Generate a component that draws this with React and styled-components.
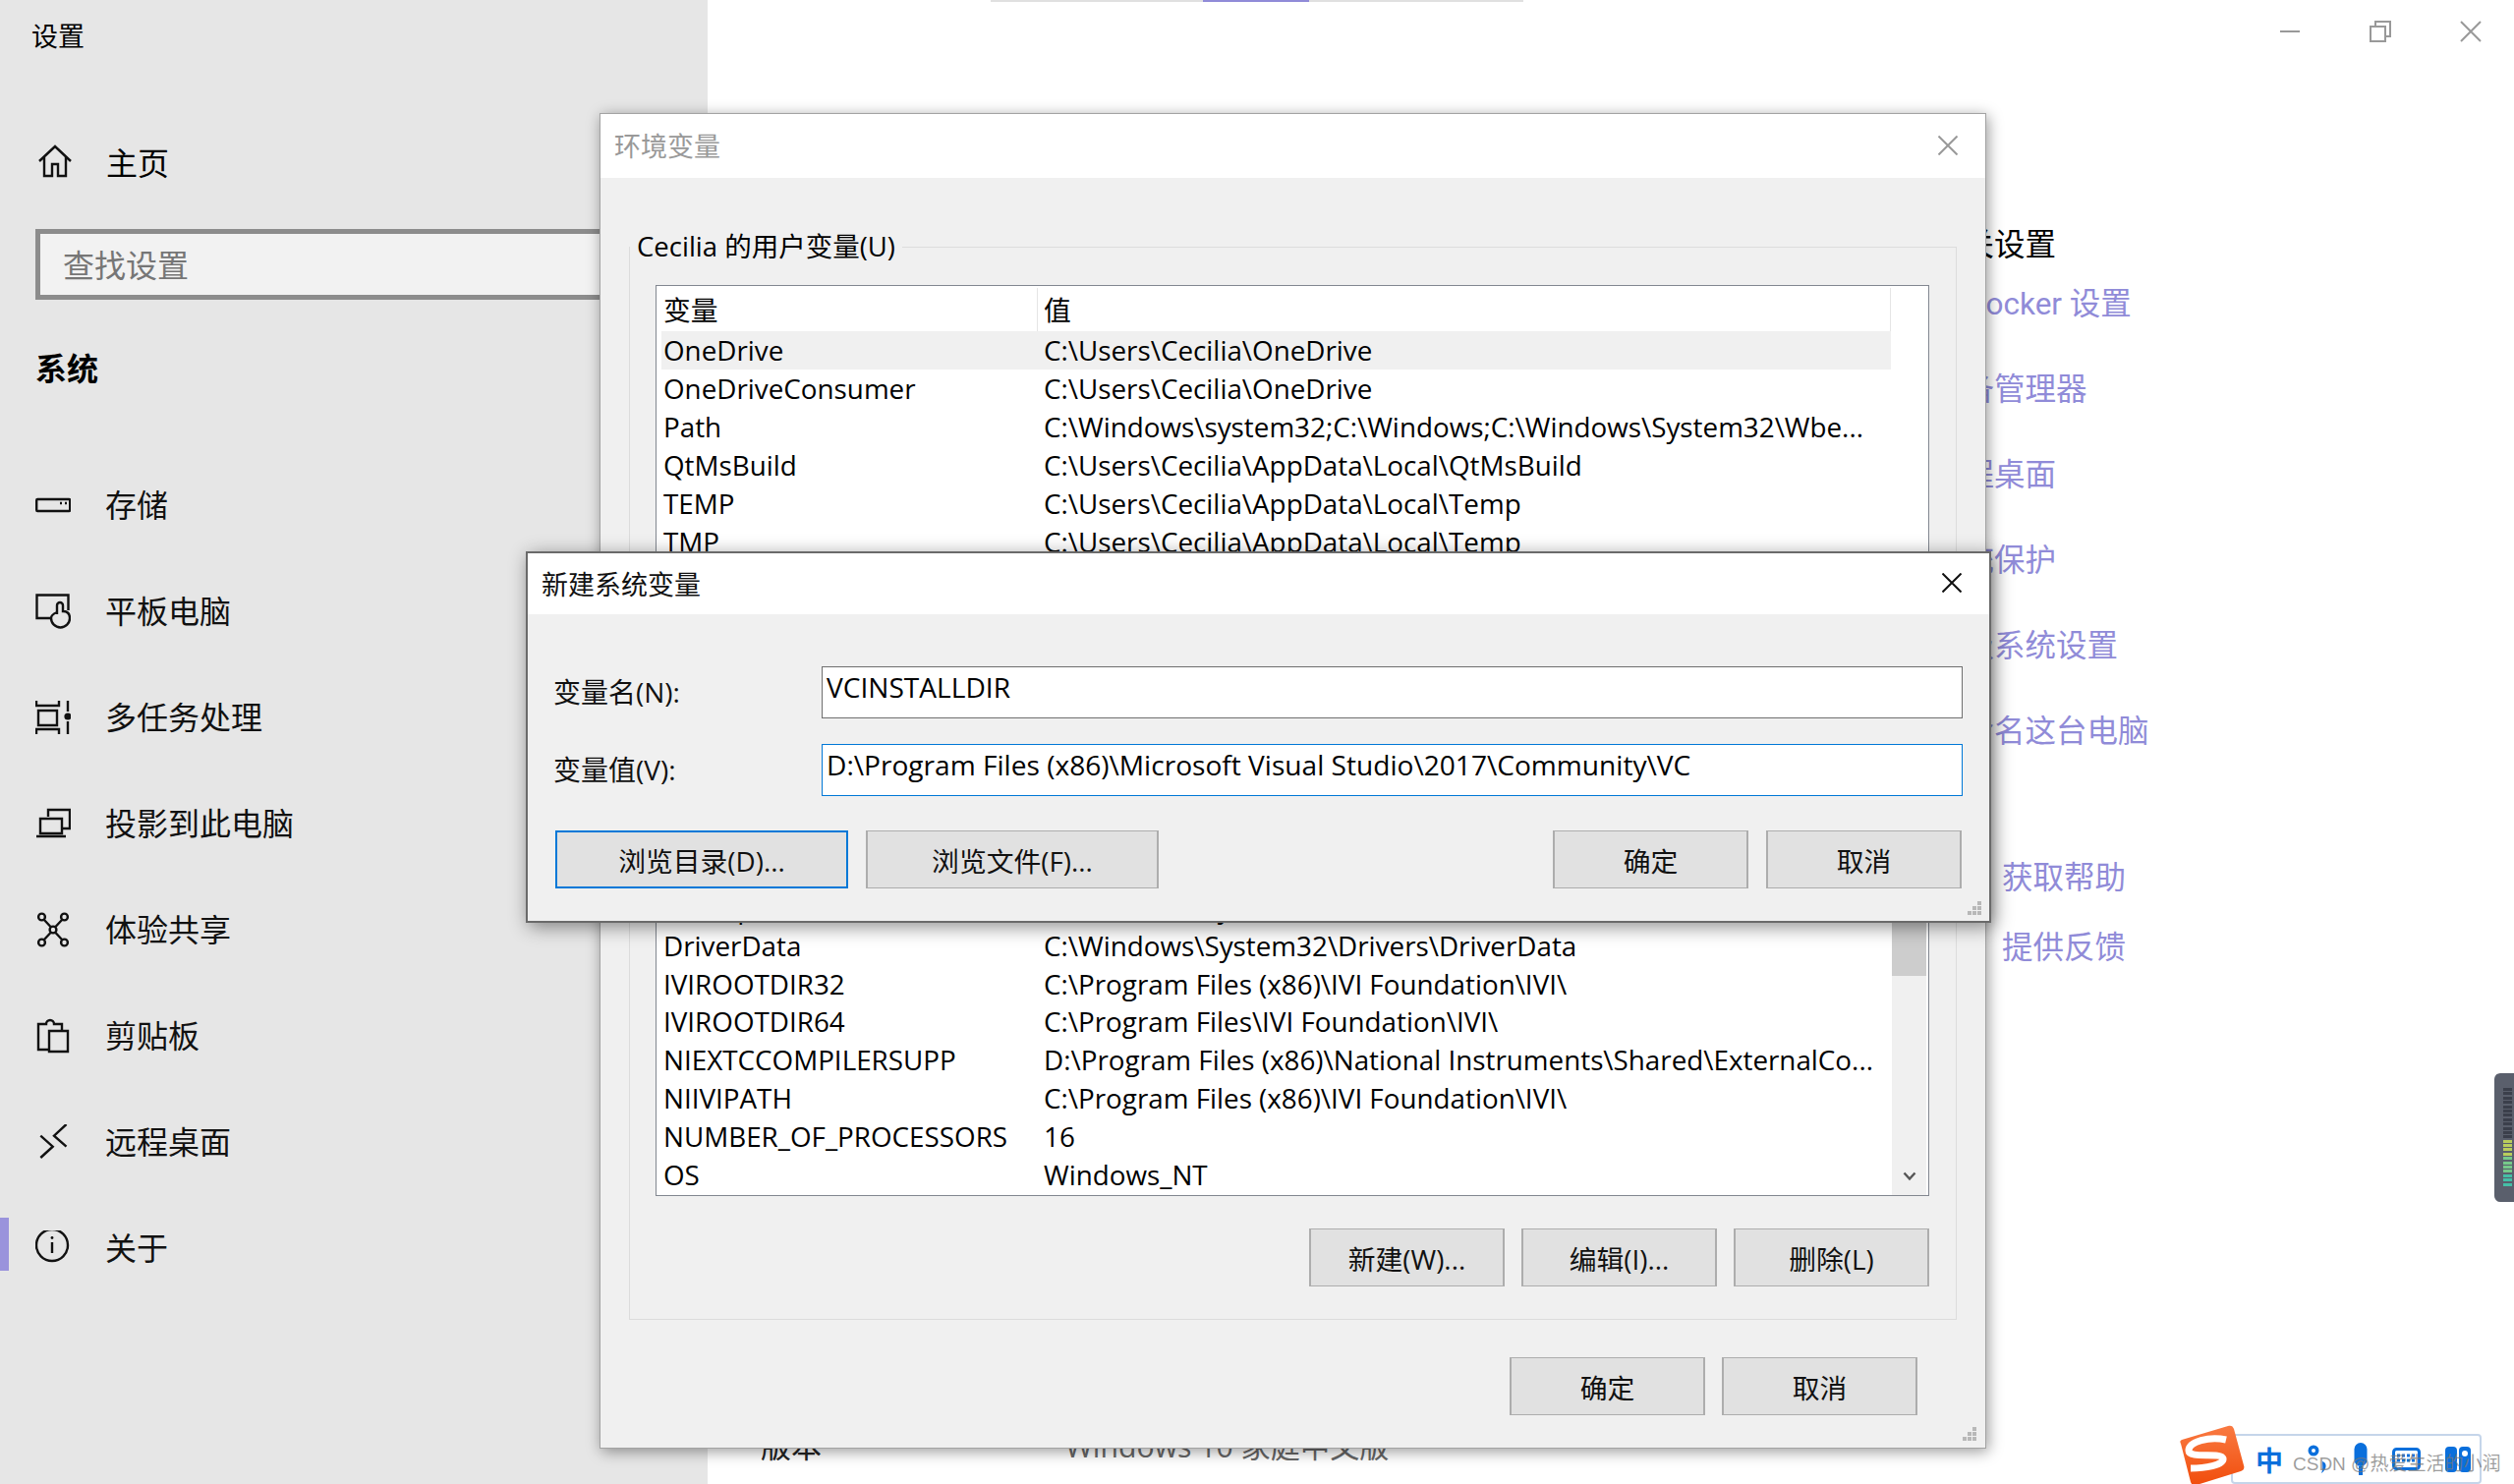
import React from "react";
import styled, { createGlobalStyle } from "styled-components";

const UI_FONT = `"Open Sans", "Noto Sans CJK SC", sans-serif`;
const CJK_FONT = `"Noto Sans CJK SC", "Noto Sans", sans-serif`;

const NAV_ITEMS = [
  { label: "存储", icon: "storage" },
  { label: "平板电脑", icon: "tablet" },
  { label: "多任务处理", icon: "multitask" },
  { label: "投影到此电脑", icon: "project" },
  { label: "体验共享", icon: "share" },
  { label: "剪贴板", icon: "clipboard" },
  { label: "远程桌面", icon: "remote" },
  { label: "关于", icon: "about", active: true },
];

const USER_VARS = [
  ["OneDrive", "C:\\Users\\Cecilia\\OneDrive"],
  ["OneDriveConsumer", "C:\\Users\\Cecilia\\OneDrive"],
  ["Path", "C:\\Windows\\system32;C:\\Windows;C:\\Windows\\System32\\Wbe..."],
  ["QtMsBuild", "C:\\Users\\Cecilia\\AppData\\Local\\QtMsBuild"],
  ["TEMP", "C:\\Users\\Cecilia\\AppData\\Local\\Temp"],
  ["TMP", "C:\\Users\\Cecilia\\AppData\\Local\\Temp"],
];

const SYSTEM_VARS = [
  ["ACSetupSvcPort", "23210"],
  ["ACSvcPort", "17532"],
  ["ALLUSERSPROFILE", "C:\\ProgramData"],
  ["ComSpec", "C:\\Windows\\system32\\cmd.exe"],
  ["DriverData", "C:\\Windows\\System32\\Drivers\\DriverData"],
  ["IVIROOTDIR32", "C:\\Program Files (x86)\\IVI Foundation\\IVI\\"],
  ["IVIROOTDIR64", "C:\\Program Files\\IVI Foundation\\IVI\\"],
  ["NIEXTCCOMPILERSUPP", "D:\\Program Files (x86)\\National Instruments\\Shared\\ExternalCo..."],
  ["NIIVIPATH", "C:\\Program Files (x86)\\IVI Foundation\\IVI\\"],
  ["NUMBER_OF_PROCESSORS", "16"],
  ["OS", "Windows_NT"],
];

const LINKS = ["BitLocker 设置", "设备管理器", "远程桌面", "系统保护", "高级系统设置", "重命名这台电脑"];

const METER = [0, 0, 0, 0, 0, 0, 0, 0, 0, 0, 0, 0, 1, 1, 1, 1, 2, 2, 2, 2, 3, 3, 3];
const METER_COLORS = ["#3b3f4b", "#b9cd5c", "#76c98a", "#45bfa6"];

const NavIcon = ({ name }) => {
  switch (name) {
    case "home":
      return (
        <svg width="36" height="36" viewBox="0 0 36 36" fill="none" stroke="#111" strokeWidth="2.4">
          <path d="M2 18 18 3l16 15M7 14v19h8V21h6v12h8V14" />
        </svg>
      );
    case "storage":
      return (
        <svg width="36" height="36" viewBox="0 0 36 36" fill="none" stroke="#111" strokeWidth="2.4">
          <rect x="1.2" y="12" width="34" height="12" rx="1" />
          <path d="M25 16h2M30 16h2" />
        </svg>
      );
    case "tablet":
      return (
        <svg width="36" height="36" viewBox="0 0 36 36" fill="none" stroke="#111" strokeWidth="2.4">
          <path d="M15 25H1.5V1.5h32V17" />
          <path d="M22 20V11a3 3 0 0 1 6 0v6c4 0 7 2 7 7a9.5 9.5 0 0 1-19 0c0-2 1-4 6-6" transform="translate(0 1)" />
        </svg>
      );
    case "multitask":
      return (
        <svg width="36" height="36" viewBox="0 0 36 36" fill="none" stroke="#111" strokeWidth="2.4">
          <path d="M1 1v5h23V1M3 11h19v15H3zM1 35v-5h23v5M33 1v11M33 22v13" />
          <circle cx="33" cy="17" r="3.6" fill="#111" stroke="none" />
        </svg>
      );
    case "project":
      return (
        <svg width="36" height="36" viewBox="0 0 36 36" fill="none" stroke="#111" strokeWidth="2.4">
          <path d="M13 11V4h22v19h-7" />
          <path d="M5 13h22v15H5zM1 31h30" />
        </svg>
      );
    case "share":
      return (
        <svg width="36" height="36" viewBox="0 0 36 36" fill="none" stroke="#111" strokeWidth="2.4">
          <circle cx="6.5" cy="5" r="3.4" />
          <circle cx="29.5" cy="5" r="3.4" />
          <circle cx="6.5" cy="31" r="3.4" />
          <circle cx="29.5" cy="31" r="3.4" />
          <circle cx="18" cy="18" r="3.4" />
          <path d="M9 8l6.5 7M27 8l-6.5 7M9 28l6.5-7M27 28l-6.5-7" />
        </svg>
      );
    case "clipboard":
      return (
        <svg width="36" height="36" viewBox="0 0 36 36" fill="none" stroke="#111" strokeWidth="2.4">
          <path d="M14 32H3V6h8a4 4 0 0 1 8 0h8v6" />
          <path d="M14 13h19v21H14z" />
        </svg>
      );
    case "remote":
      return (
        <svg width="36" height="36" viewBox="0 0 36 36" fill="none" stroke="#111" strokeWidth="2.4">
          <path d="M31.5 0 19 11.7l12.5 11M5.3 11.7l12.4 11L5.3 34" />
        </svg>
      );
    default:
      return (
        <svg width="36" height="36" viewBox="0 0 36 36" fill="none" stroke="#111" strokeWidth="2.4">
          <circle cx="17" cy="15" r="16" />
          <path d="M17 12v11" />
          <circle cx="17" cy="7.5" r="1.4" fill="#111" stroke="none" />
        </svg>
      );
  }
};

const CloseGlyph = ({ color }) => (
  <svg width="20" height="20" viewBox="0 0 20 20" stroke={color} strokeWidth="2" fill="none">
    <path d="M.5.5l19 19M19.5.5l-19 19" />
  </svg>
);

const GripGlyph = () => (
  <svg width="16" height="16" viewBox="0 0 16 16" fill="#b8b8b8">
    <rect x="11" y="1" width="4" height="4" />
    <rect x="6" y="6" width="4" height="4" />
    <rect x="11" y="6" width="4" height="4" />
    <rect x="1" y="11" width="4" height="4" />
    <rect x="6" y="11" width="4" height="4" />
    <rect x="11" y="11" width="4" height="4" />
  </svg>
);

const VarList = ({ rows, height, scrollbar, highlight }) => (
  <ListFrame $height={height}>
    <ListBody>
      <ListHeader>
        <HeadCell $first>变量</HeadCell>
        <HeadCell>值</HeadCell>
      </ListHeader>
      {rows.map(([name, value], i) => (
        <VarRow key={name} $selected={highlight && i === 0}>
          <span>{name}</span>
          <span>{value}</span>
        </VarRow>
      ))}
    </ListBody>
    {scrollbar ? (
      <ScrollTrack>
        <ScrollThumb />
        <svg width="14" height="10" viewBox="0 0 14 10" fill="none" stroke="#555" strokeWidth="2.4">
          <path d="M1.5 1.5 7 7.5l5.5-6" />
        </svg>
      </ScrollTrack>
    ) : (
      <ScrollGap />
    )}
  </ListFrame>
);

const App = () => {
  return (
    <>
      <GlobalStyle />
      <Screen>
        <Sidebar>
          <AppTitle>设置</AppTitle>
          <HomeRow>
            <NavIcon name="home" />
            <span>主页</span>
          </HomeRow>
          <SearchBox>查找设置</SearchBox>
          <SectionTitle>系统</SectionTitle>
          <NavList>
            {NAV_ITEMS.map((item) => (
              <NavRow key={item.label} $active={item.active}>
                <NavIcon name={item.icon} />
                <span>{item.label}</span>
              </NavRow>
            ))}
          </NavList>
        </Sidebar>

        <MainPane>
          <TopStrip>
            <TopStripMark />
          </TopStrip>
          <WindowControls>
            <svg width="22" height="22" viewBox="0 0 22 22" stroke="#999" strokeWidth="2" fill="none">
              <path d="M1 11h20" />
            </svg>
            <svg width="22" height="22" viewBox="0 0 22 22" stroke="#999" strokeWidth="2" fill="none">
              <path d="M1 6h15v15H1zM6 6V1h15v15h-5" />
            </svg>
            <svg width="22" height="22" viewBox="0 0 22 22" stroke="#999" strokeWidth="2" fill="none">
              <path d="M1 1l20 20M21 1 1 21" />
            </svg>
          </WindowControls>
          <MainColumns>
            <SpecColumn>
              <SpecRow>
                <SpecName>版本</SpecName>
                <SpecValue>Windows 10 家庭中文版</SpecValue>
              </SpecRow>
              <SpecRow>
                <SpecName>版本号</SpecName>
                <SpecValue>1909</SpecValue>
              </SpecRow>
            </SpecColumn>
            <RelatedColumn>
              <RelatedTitle>相关设置</RelatedTitle>
              <LinkList>
                {LINKS.map((link) => (
                  <RelatedLink key={link}>{link}</RelatedLink>
                ))}
              </LinkList>
              <HelpList>
                <RelatedLink>获取帮助</RelatedLink>
                <RelatedLink>提供反馈</RelatedLink>
              </HelpList>
            </RelatedColumn>
          </MainColumns>
        </MainPane>

        <EnvWindow>
          <TitleBar $height={65}>
            <WindowTitle $dim>环境变量</WindowTitle>
            <CloseGlyph color="#999" />
          </TitleBar>
          <EnvBody>
            <GroupBox $height={440}>
              <GroupLegend>Cecilia 的用户变量(U)</GroupLegend>
              <VarList rows={USER_VARS} height={360} highlight />
            </GroupBox>
            <GroupBox $height={642}>
              <GroupLegend>系统变量(S)</GroupLegend>
              <VarList rows={SYSTEM_VARS} height={477} scrollbar />
              <ButtonRow>
                <DialogButton>新建(W)...</DialogButton>
                <DialogButton>编辑(I)...</DialogButton>
                <DialogButton>删除(L)</DialogButton>
              </ButtonRow>
            </GroupBox>
            <FooterRow>
              <DialogButton>确定</DialogButton>
              <DialogButton>取消</DialogButton>
            </FooterRow>
          </EnvBody>
          <Grip $right={8} $bottom={6}>
            <GripGlyph />
          </Grip>
        </EnvWindow>

        <NewVarWindow>
          <TitleBar $height={62}>
            <WindowTitle>新建系统变量</WindowTitle>
            <CloseGlyph color="#111" />
          </TitleBar>
          <NewVarBody>
            <FieldGrid>
              <FieldLabel>变量名(N):</FieldLabel>
              <FieldInput>VCINSTALLDIR</FieldInput>
              <FieldLabel>变量值(V):</FieldLabel>
              <FieldInput $focused>D:\Program Files (x86)\Microsoft Visual Studio\2017\Community\VC</FieldInput>
            </FieldGrid>
            <NewVarButtons>
              <BrowseButton $focused>浏览目录(D)...</BrowseButton>
              <BrowseButton>浏览文件(F)...</BrowseButton>
              <ButtonSpacer />
              <DialogButton>确定</DialogButton>
              <DialogButton>取消</DialogButton>
            </NewVarButtons>
          </NewVarBody>
          <Grip $right={7} $bottom={5}>
            <GripGlyph />
          </Grip>
        </NewVarWindow>

        <ImeBar>
          <ImeTray>
            <ImeChar>中</ImeChar>
            <svg width="22" height="30" viewBox="0 0 22 30" fill="#0a6fdc">
              <circle cx="6" cy="6" r="5.5" />
              <circle cx="6" cy="6" r="2" fill="#fff" />
              <path d="M15 17c5 1 5 8-1 12 2-4 1-8 1-12z" />
            </svg>
            <svg width="14" height="33" viewBox="0 0 14 33" fill="#0a6fdc">
              <rect x="0.5" y="0" width="13" height="24" rx="6.5" />
              <rect x="5" y="24" width="4" height="9" />
            </svg>
            <svg width="29" height="23" viewBox="0 0 29 23" fill="none" stroke="#0a6fdc" strokeWidth="3">
              <rect x="1.5" y="1.5" width="26" height="20" rx="3" />
              <path d="M5 8h19M5 13h19" strokeDasharray="3 2" />
            </svg>
            <svg width="26" height="26" viewBox="0 0 26 26" fill="#0a6fdc">
              <rect x="0" y="0" width="12" height="26" rx="4" />
              <rect x="14" y="0" width="12" height="26" rx="4" />
              <circle cx="20" cy="7" r="3" fill="#fff" />
            </svg>
          </ImeTray>
          <ImeLogo width="66" height="62" viewBox="0 0 66 62">
            <defs>
              <linearGradient id="imeOrange" x1="0" y1="0" x2="0" y2="1">
                <stop offset="0" stopColor="#f97a42" />
                <stop offset="1" stopColor="#f14d0c" />
              </linearGradient>
            </defs>
            <path d="M2 15 49 1c3-1 5 0 6 3l10 37c1 3 0 5-3 6L17 61c-3 1-5 0-6-3L1 19c-1-2-1-3 1-4z" fill="url(#imeOrange)" />
            <path d="M47 15C30 11 9 17 9 26c0 9 33 1 35 8 1 7-19 10-33 10" fill="none" stroke="#fff" strokeWidth="7" />
          </ImeLogo>
          <Watermark>CSDN @热爱生活的小润</Watermark>
        </ImeBar>

        <VolumeMeter>
          {METER.map((level, i) => (
            <MeterBar key={i} $color={METER_COLORS[level]} />
          ))}
        </VolumeMeter>
      </Screen>
    </>
  );
};

export default App;

const GlobalStyle = createGlobalStyle`
  html, body {
    margin: 0;
    padding: 0;
    background: #fff;
  }
  * {
    box-sizing: border-box;
  }
`;

const Screen = styled.div`
  width: 2558px;
  height: 1510px;
  display: flex;
  position: relative;
  overflow: hidden;
  background: #fff;
  color: #000;
  font-family: ${CJK_FONT};
`;

const Sidebar = styled.div`
  width: 720px;
  flex: none;
  background: #e6e6e6;
  display: flex;
  flex-direction: column;
`;

const AppTitle = styled.div`
  height: 74px;
  padding: 0 0 3px 32px;
  display: flex;
  align-items: center;
  font-size: 27px;
`;

const HomeRow = styled.div`
  height: 108px;
  margin-top: 37px;
  padding: 0 0 3px 38px;
  display: flex;
  align-items: center;
  gap: 34px;
  font-size: 32px;
`;

const SearchBox = styled.div`
  width: 644px;
  height: 72px;
  margin: 14px 0 0 36px;
  padding: 0 0 3px 23px;
  display: flex;
  align-items: center;
  border: 5px solid #8c8c8c;
  background: #f2f2f2;
  color: #767676;
  font-size: 32px;
`;

const SectionTitle = styled.div`
  height: 48px;
  margin: 45px 0 0 36px;
  padding-bottom: 3px;
  display: flex;
  align-items: center;
  font-size: 32px;
  font-weight: 700;
`;

const NavList = styled.div`
  margin-top: 62px;
  display: flex;
  flex-direction: column;
`;

const NavRow = styled.div`
  height: 107.95px;
  padding-left: 36px;
  display: flex;
  align-items: center;
  gap: 35px;
  position: relative;
  font-size: 32px;
  color: #111;

  span {
    margin-bottom: 3px;
  }

  &::before {
    content: "";
    display: ${(p) => (p.$active ? "block" : "none")};
    position: absolute;
    left: 0;
    top: 23px;
    width: 9px;
    height: 54px;
    background: #9a93dc;
  }
`;

const MainPane = styled.div`
  flex: 1;
  display: flex;
  flex-direction: column;
`;

const TopStrip = styled.div`
  width: 542px;
  height: 2px;
  margin-left: 288px;
  padding-left: 216px;
  background: #e0e0e0;
`;

const TopStripMark = styled.div`
  width: 108px;
  height: 2px;
  background: #908bd8;
`;

const WindowControls = styled.div`
  align-self: flex-end;
  margin: 19px 33px 0 0;
  display: flex;
  gap: 70px;
`;

const MainColumns = styled.div`
  flex: 1;
  display: flex;
  justify-content: space-between;
`;

const SpecColumn = styled.div`
  width: 700px;
  margin-left: 54px;
  padding-top: 1404px;
  display: flex;
  flex-direction: column;
  gap: 20px;
`;

const SpecRow = styled.div`
  height: 40px;
  display: grid;
  grid-template-columns: 310px 1fr;
  align-items: center;
  font-size: 31px;
  white-space: nowrap;
`;

const SpecName = styled.span`
  color: #222;
`;

const SpecValue = styled.span`
  color: #666;
  font-family: ${UI_FONT};
  font-size: 30.2px;
`;

const RelatedColumn = styled.div`
  width: 592px;
  padding-top: 181px;
  display: flex;
  flex-direction: column;
`;

const RelatedTitle = styled.div`
  height: 44px;
  display: flex;
  align-items: center;
  font-size: 31.5px;
`;

const LinkList = styled.div`
  margin-top: 18px;
  display: flex;
  flex-direction: column;
  gap: 47px;
`;

const RelatedLink = styled.div`
  height: 40px;
  display: flex;
  align-items: center;
  font-family: "Roboto", "Noto Sans CJK SC", sans-serif;
  font-size: 31.5px;
  color: #908bd8;
  white-space: pre;
`;

const HelpList = styled.div`
  margin: 109px 0 0 71px;
  display: flex;
  flex-direction: column;
  gap: 31px;
`;

const EnvWindow = styled.div`
  position: absolute;
  left: 610px;
  top: 115px;
  width: 1411px;
  height: 1359px;
  display: flex;
  flex-direction: column;
  background: #f0f0f0;
  border: 1px solid #a3a3a3;
  box-shadow: 2px 3px 14px rgba(0, 0, 0, 0.4);
  font-family: ${UI_FONT};
`;

const TitleBar = styled.div`
  height: ${(p) => p.$height}px;
  flex: none;
  padding: 0 28px 2px 14px;
  display: flex;
  align-items: center;
  justify-content: space-between;
  background: #fff;
`;

const WindowTitle = styled.div`
  font-size: 27px;
  font-family: ${CJK_FONT};
  color: ${(p) => (p.$dim ? "#999" : "#111")};
`;

const EnvBody = styled.div`
  padding: 70px 29px 0;
  display: flex;
  flex-direction: column;
  gap: 10px;
`;

const GroupBox = styled.div`
  height: ${(p) => p.$height}px;
  padding: 38px 27px 0 26px;
  position: relative;
  border: 1px solid #dcdcdc;
`;

const GroupLegend = styled.div`
  position: absolute;
  left: 0;
  top: -19px;
  padding: 0 7px;
  background: #f0f0f0;
  font-size: 27.5px;
  line-height: 36px;
`;

const ListFrame = styled.div`
  height: ${(p) => p.$height}px;
  display: flex;
  overflow: hidden;
  background: #fff;
  border: 1px solid #828790;
  font-size: 27.8px;
`;

const ListBody = styled.div`
  flex: 1;
  min-width: 0;
  padding-left: 5px;
  display: flex;
  flex-direction: column;
`;

const ListHeader = styled.div`
  height: 46px;
  flex: none;
  display: grid;
  grid-template-columns: 383px 1fr;
`;

const HeadCell = styled.div`
  padding: 0 0 3px ${(p) => (p.$first ? 2 : 6)}px;
  margin-top: 2px;
  display: flex;
  align-items: center;
  border-right: 1px solid #e5e5e5;
`;

const VarRow = styled.div`
  height: 38.85px;
  flex: none;
  padding-left: 2px;
  display: grid;
  grid-template-columns: 387px 1fr;
  align-items: center;
  background: ${(p) => (p.$selected ? "#f0f0f0" : "transparent")};
  white-space: nowrap;
`;

const ScrollGap = styled.div`
  width: 38px;
  flex: none;
`;

const ScrollTrack = styled.div`
  width: 35px;
  margin: 0 2px 0 1px;
  flex: none;
  display: flex;
  flex-direction: column;
  justify-content: space-between;
  align-items: center;
  padding-bottom: 14px;
  background: #f0f0f0;
`;

const ScrollThumb = styled.div`
  width: 100%;
  height: 252px;
  background: #cdcdcd;
`;

const ButtonRow = styled.div`
  margin-top: 33px;
  display: flex;
  justify-content: flex-end;
  gap: 17px;
`;

const FooterRow = styled.div`
  margin: 28px 40px 0 0;
  display: flex;
  justify-content: flex-end;
  gap: 17px;
`;

const DialogButton = styled.div`
  width: 199px;
  height: 59px;
  padding-top: 1px;
  display: flex;
  align-items: center;
  justify-content: center;
  background: #e1e1e1;
  border: solid #adadad;
  border-width: 1px 2px;
  font-size: 27.8px;
  color: #111;
`;

const Grip = styled.div`
  position: absolute;
  right: ${(p) => p.$right}px;
  bottom: ${(p) => p.$bottom}px;
  line-height: 0;
`;

const NewVarWindow = styled.div`
  position: absolute;
  left: 535px;
  top: 561px;
  width: 1491px;
  height: 378px;
  display: flex;
  flex-direction: column;
  background: #f0f0f0;
  border: 2px solid #6a6a6a;
  box-shadow: 3px 4px 18px rgba(0, 0, 0, 0.45);
  font-family: ${UI_FONT};
`;

const NewVarBody = styled.div`
  padding: 53px 27px 0 26px;
  display: flex;
  flex-direction: column;
`;

const FieldGrid = styled.div`
  display: grid;
  grid-template-columns: 273px 1fr;
  grid-auto-rows: 53px;
  row-gap: 26px;
  align-items: center;
`;

const FieldLabel = styled.div`
  padding-bottom: 3px;
  font-size: 28px;
  color: #111;
`;

const FieldInput = styled.div`
  height: 100%;
  padding: 0 4px 12px;
  display: flex;
  align-items: center;
  background: #fff;
  border: 1px solid ${(p) => (p.$focused ? "#0078d7" : "#6f6f6f")};
  font-size: 28.1px;
`;

const NewVarButtons = styled.div`
  margin-top: 35px;
  padding: 0 1px 0 2px;
  display: flex;
  gap: 18px;
`;

const ButtonSpacer = styled.div`
  flex: 1;
`;

const BrowseButton = styled(DialogButton)`
  width: 298px;
  border: ${(p) => (p.$focused ? "2px solid #0078d7" : undefined)};
`;

const ImeBar = styled.div`
  position: absolute;
  left: 2218px;
  top: 1450px;
  width: 307px;
  height: 60px;
`;

const ImeLogo = styled.svg`
  position: absolute;
  left: 0;
  top: 0;
`;

const ImeTray = styled.div`
  position: absolute;
  left: 52px;
  top: 9px;
  width: 255px;
  height: 51px;
  padding: 0 9px 0 23px;
  display: flex;
  align-items: center;
  justify-content: space-between;
  background: #fff;
  border: 2px solid #c5d5ea;
  border-radius: 4px;
`;

const ImeChar = styled.span`
  font-size: 28px;
  font-weight: 700;
  color: #0a6fdc;
`;

const Watermark = styled.div`
  position: absolute;
  left: 115px;
  bottom: 9px;
  white-space: nowrap;
  font-family: "Liberation Sans", "Noto Sans CJK SC", sans-serif;
  font-size: 19px;
  color: rgba(120, 120, 120, 0.72);
`;

const VolumeMeter = styled.div`
  position: absolute;
  right: 0;
  top: 1092px;
  width: 20px;
  height: 131px;
  padding: 15px 0 0 9px;
  display: flex;
  flex-direction: column;
  gap: 1.4px;
  background: #5a5f6c;
  border-radius: 6px 0 0 6px;
`;

const MeterBar = styled.div`
  width: 9px;
  height: 3px;
  flex: none;
  background: ${(p) => p.$color};
`;
